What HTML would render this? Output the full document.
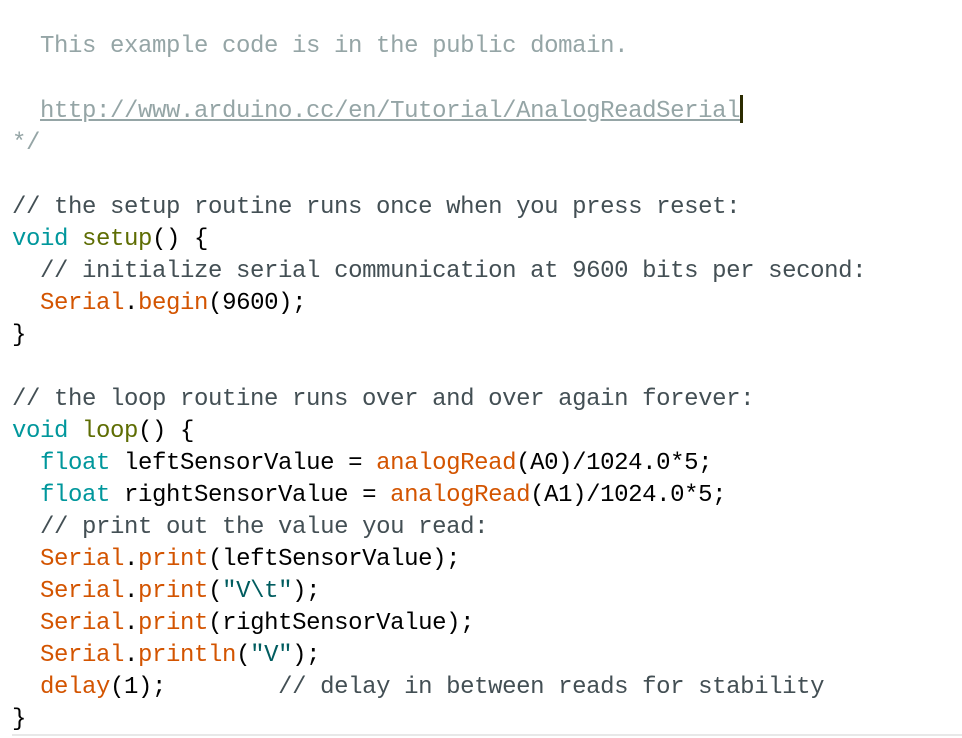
<!DOCTYPE html>
<html><head><meta charset="utf-8"><style>
html,body{margin:0;padding:0;background:#fff;width:962px;height:738px;overflow:hidden}
pre{position:absolute;left:12px;top:31px;margin:0;font-family:"Liberation Mono",monospace;font-size:24px;letter-spacing:-0.4px;line-height:32px;color:#000;white-space:pre}
.c{color:#434f54}.pc{color:#95a5a6}.k{color:#00979c}.f{color:#5e6d03}.o{color:#d35400}.s{color:#005c5f}
.u{text-decoration:underline}
.cur{display:inline-block;width:3px;height:28px;background:#2b2b00;vertical-align:-6px}
.rule{position:absolute;left:12px;top:734px;width:950px;height:2px;background:#e8e8e8}
</style></head><body>
<pre><span class="pc">  This example code is in the public domain.</span>

<span class="pc">  <span class="u">http://www.arduino.cc/en/Tutorial/AnalogReadSerial</span></span><span class="cur"></span>
<span class="pc">*/</span>

<span class="c">// the setup routine runs once when you press reset:</span>
<span class="k">void</span> <span class="f">setup</span>() {
  <span class="c">// initialize serial communication at 9600 bits per second:</span>
  <span class="o">Serial</span>.<span class="o">begin</span>(9600);
}

<span class="c">// the loop routine runs over and over again forever:</span>
<span class="k">void</span> <span class="f">loop</span>() {
  <span class="k">float</span> leftSensorValue = <span class="o">analogRead</span>(A0)/1024.0*5;
  <span class="k">float</span> rightSensorValue = <span class="o">analogRead</span>(A1)/1024.0*5;
  <span class="c">// print out the value you read:</span>
  <span class="o">Serial</span>.<span class="o">print</span>(leftSensorValue);
  <span class="o">Serial</span>.<span class="o">print</span>(<span class="s">"V\t"</span>);
  <span class="o">Serial</span>.<span class="o">print</span>(rightSensorValue);
  <span class="o">Serial</span>.<span class="o">println</span>(<span class="s">"V"</span>);
  <span class="o">delay</span>(1);        <span class="c">// delay in between reads for stability</span>
}</pre>
<div class="rule"></div>
</body></html>
